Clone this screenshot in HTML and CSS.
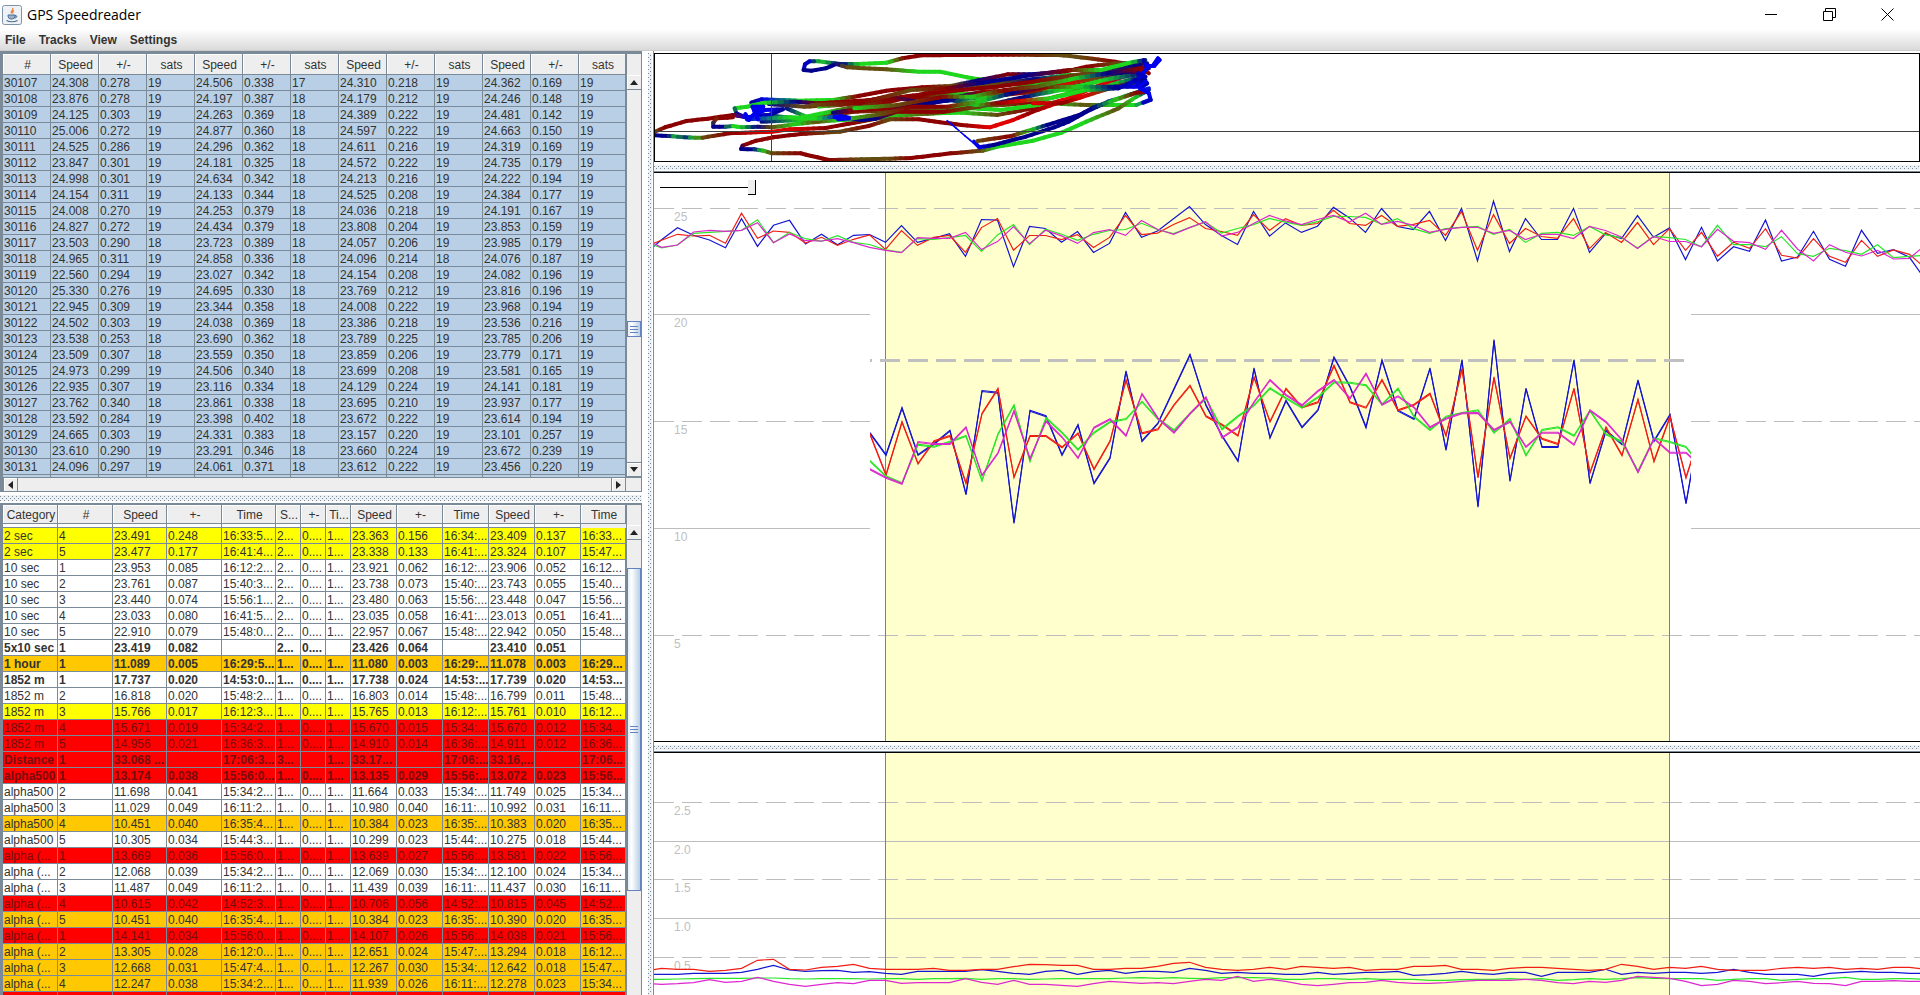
FILE: index.html
```html
<!DOCTYPE html>
<html lang="en">
<head>
<meta charset="utf-8">
<title>GPS Speedreader</title>
<link rel="stylesheet" href="styles.css">
</head>
<body>
<div class="window">
  <header class="titlebar">
    <svg class="app-icon" width="20" height="20" viewBox="0 0 20 20" aria-hidden="true">
      <rect x="0.5" y="0.5" width="19" height="19" rx="2" fill="#eef2f6" stroke="#7f93a8"/>
      <path d="M10.500 3c2 2-3 3-1 5.500M12 5.500c-2 1-1.500 2-1 3" fill="none" stroke="#e8843c" stroke-width="1.300"/>
      <path d="M6 10h7c0 3-1 4-3.500 4S6 13 6 10zM13 10.500c2.500-.5 2.500 2.500-.5 2.500" fill="#9db4cc" stroke="#4d6d92"/>
      <path d="M4.500 15.500c3 1.500 8 1.500 11 0" fill="none" stroke="#4d6d92" stroke-width="1.200"/>
    </svg>
    <h1 class="title">GPS Speedreader</h1>
    <div class="window-buttons">
      <button type="button" aria-label="Minimize"><svg width="13" height="13"><path d="M0 6.500h12"/></svg></button>
      <button type="button" aria-label="Restore"><svg width="13" height="13"><path d="M.5 3.500h9v9h-9zM2.500 3.500v-3h10v9h-3"/></svg></button>
      <button type="button" aria-label="Close"><svg width="13" height="13"><path d="M.5 .5l12 12M12.500 .5l-12 12"/></svg></button>
    </div>
  </header>
  <nav class="menubar" aria-label="Main menu">
    <button type="button">File</button>
    <button type="button">Tracks</button>
    <button type="button">View</button>
    <button type="button">Settings</button>
  </nav>
  <main class="split">
    <section class="tables">
      <div class="scrollpane with-bottom">
        <div class="viewport">
          <table class="points">
            <colgroup><col class="w48"><col class="w48"><col class="w48"><col class="w48"><col class="w48"><col class="w48"><col class="w48"><col class="w48"><col class="w48"><col class="w48"><col class="w48"><col class="w48"><col class="w47"></colgroup>
            <thead><tr><th>#</th><th>Speed</th><th>+/-</th><th>sats</th><th>Speed</th><th>+/-</th><th>sats</th><th>Speed</th><th>+/-</th><th>sats</th><th>Speed</th><th>+/-</th><th>sats</th></tr></thead>
            <tbody id="points"></tbody>
          </table>
        </div>
        <div class="vbar">
          <button type="button" aria-label="Scroll up"><i class="arrow up"></i></button>
          <div class="track"><div class="thumb small"><i class="grip"></i></div></div>
          <button type="button" aria-label="Scroll down"><i class="arrow down"></i></button>
        </div>
        <div class="hbar">
          <button type="button" aria-label="Scroll left"><i class="arrow left"></i></button>
          <div class="track"></div>
          <button type="button" aria-label="Scroll right"><i class="arrow right"></i></button>
        </div>
      </div>
      <div class="divider"></div>
      <div class="scrollpane">
        <div class="viewport">
          <table class="results">
            <colgroup><col class="w55"><col class="w55"><col class="w54"><col class="w55"><col class="w54"><col class="w25"><col class="w25"><col class="w25"><col class="w46"><col class="w46"><col class="w46"><col class="w46"><col class="w46"><col class="w45"></colgroup>
            <thead><tr><th>Category</th><th>#</th><th>Speed</th><th>+-</th><th>Time</th><th>S...</th><th>+-</th><th>Ti...</th><th>Speed</th><th>+-</th><th>Time</th><th>Speed</th><th>+-</th><th>Time</th></tr></thead>
            <tbody id="results"></tbody>
          </table>
        </div>
        <div class="vbar">
          <button type="button" aria-label="Scroll up"><i class="arrow up"></i></button>
          <div class="track"><div class="thumb large"><i class="grip"></i></div></div>
        </div>
      </div>
    </section>
    <div class="divider upright"></div>
    <section class="plots">
      <div class="map"><svg id="map" role="img" aria-label="Track map"></svg></div>
      <div class="divider"></div>
      <div class="chart closed">
        <svg id="speed" role="img" aria-label="Speed"></svg>
        <input class="zoom" type="range" min="0" max="100" value="100" aria-label="Zoom">
      </div>
      <div class="divider"></div>
      <div class="chart"><svg id="error" role="img" aria-label="Speed error"></svg></div>
    </section>
  </main>
</div>
<script src="app.js"></script>
</body>
</html>
```
FILE: styles.css
```css
* { box-sizing: border-box; }

body {
  margin: 0;
  font: 12px/15px "Liberation Sans", Arial, sans-serif;
  color: #333;
  background: #fff;
}

button {
  margin: 0;
  padding: 0;
  border: 0;
  background: none;
  color: inherit;
  font: inherit;
}

.window {
  display: grid;
  grid-template-rows: 29px 22px 1fr;
  height: 100vh;
  overflow: hidden;
}

.titlebar {
  display: flex;
  align-items: center;
  gap: 5px;
  padding: 0 4px 0 2px;
}

.title {
  margin: 0;
  flex: 1;
  font: 14px/20px "Open Sans", "Noto Sans", sans-serif;
  color: #000;
}

.window-buttons { display: flex; }

.window-buttons button {
  display: flex;
  justify-content: center;
  align-items: center;
  width: 58px;
  height: 28px;
}

.window-buttons svg { fill: none; stroke: #000; }

.menubar {
  display: flex;
  align-items: center;
  gap: 13px;
  padding: 2px 0 0 5px;
  font-weight: bold;
  background: linear-gradient(#fff, #dadada);
  border-bottom: 1px solid #ccc;
}

.split {
  display: grid;
  grid-template-columns: 642fr 11px 1267fr;
  min-height: 0;
}

.tables {
  display: grid;
  grid-template-rows: 441fr 11px 492fr;
  min-width: 0;
  min-height: 0;
}

.plots {
  display: grid;
  grid-template-rows: 111fr 10px 570fr 10px 243fr;
  min-width: 0;
  min-height: 0;
  border-left: 1px solid #7a8a99;
}

.divider {
  background-color: #eef1f4;
  background-image:
    conic-gradient(from 270deg at 1px 1px, #7a8a99 90deg, transparent 0),
    conic-gradient(from 270deg at 1px 1px, #7a8a99 90deg, transparent 0);
  background-size: 4px 4px;
  background-position: 0 0, 2px 2px;
  background-clip: content-box;
  padding: 3px 0 2px;
}

.plots .divider {
  padding-bottom: 1px;
  border-bottom: 1px solid #7a8a99;
}

.divider.upright { padding: 2px 1px 0 6px; }

.scrollpane {
  display: grid;
  grid-template-columns: 1fr 15px;
  grid-template-rows: 1fr;
  min-height: 0;
  border: solid #7a8a99;
  border-width: 2px 1px 0 3px;
  background: #eee;
}

.scrollpane.with-bottom {
  grid-template-rows: 1fr 14px;
  border-width: 3px 1px 1px 3px;
}

.viewport {
  min-height: 0;
  overflow: hidden;
}

table {
  width: 100%;
  table-layout: fixed;
  border-collapse: separate;
  border-spacing: 0;
}

.w48 { width: 48px; }
.w47 { width: 47px; }
.w55 { width: 55px; }
.w54 { width: 54px; }
.w46 { width: 46px; }
.w45 { width: 45px; }
.w25 { width: 25px; }

th, td {
  overflow: hidden;
  white-space: nowrap;
  border: solid #7a8a99;
  border-width: 0 1px 1px 0;
}

th {
  height: 21px;
  padding: 3px 0 0 2px;
  font-weight: normal;
  text-align: center;
  background: #eee;
  box-shadow: inset 1px 1px #fff;
}

.results th { height: 19px; }

td {
  height: 16px;
  padding: 1px 0 0 1px;
  text-align: left;
  line-height: 14px;
}

.points td { background: #b8cfe5; }
.results td { background: #fff; }
.results .yellow td { background: #ff0; }
.results .orange td { background: #ffc800; }
.results .red td { background: #f00; color: #780c0c; }
.results .best td { font-weight: bold; }
.results .sliver td { height: 4px; padding: 0; line-height: 3px; }

.vbar {
  display: flex;
  flex-direction: column;
  min-height: 0;
  padding-top: 20px;
  border-left: 1px solid #7a8a99;
}

.with-bottom .vbar { padding-top: 21px; }

.hbar {
  display: flex;
  margin-right: -15px;
  padding-right: 15px;
  border-top: 1px solid #7a8a99;
}

.vbar button, .hbar button {
  display: flex;
  flex: none;
  justify-content: center;
  align-items: center;
  border: 1px solid #7a8a99;
  box-shadow: inset 1px 1px #fff;
}

.vbar button { height: 15px; border-width: 0 0 1px; }
.vbar button:last-child { border-width: 1px 0; }
.hbar button { width: 15px; border-width: 0 1px; }

.track { flex: 1; background: #eee; }

.vbar .track { display: flex; flex-direction: column; }

.arrow { border: 4px solid transparent; }
.arrow.up { border-top: 0; border-bottom: 5px solid #222; }
.arrow.down { border-bottom: 0; border-top: 5px solid #222; }
.arrow.left { border-left: 0; border-right: 5px solid #222; }
.arrow.right { border-right: 0; border-left: 5px solid #222; }

.thumb {
  display: flex;
  justify-content: center;
  align-items: center;
  border: 1px solid #6382bf;
  background: linear-gradient(90deg, #e6eef7, #fff 30%, #b8cfe5);
}

.thumb.small { height: 16px; margin-top: 231px; }
.thumb.large { height: 323px; margin-top: 28px; }

.grip {
  width: 8px;
  height: 7px;
  background: repeating-linear-gradient(#6382bf 0 1px, transparent 1px 3px);
}

.map {
  min-height: 0;
  margin-top: 2px;
  border: 1px solid #000;
}

.chart {
  position: relative;
  min-height: 0;
  border-top: 1px solid #000;
}

.chart.closed { border-bottom: 1px solid #000; }

.map svg, .chart svg {
  display: block;
  width: 100%;
  height: 100%;
  overflow: hidden;
}

.chart text { fill: #c0c0c0; font-size: 12px; }
.grid { stroke: #bdbdbd; }
.grid.dashed { stroke-dasharray: 20 8; }
.edge { stroke: #7f7f7f; }
.selection { fill: #ffffce; }
.line { fill: none; }
.line.blue { stroke: #1414d2; }
.line.red { stroke: #f01e14; }
.line.green { stroke: #28e628; }
.line.magenta { stroke: #dc28cd; }
.average { stroke: #c0c0c0; stroke-width: 3; stroke-dasharray: 20 8; }
.crosshair { stroke: #404040; stroke-width: 1; }

.zoom {
  position: absolute;
  left: 6px;
  top: 7px;
  width: 96px;
  height: 15px;
  margin: 0;
  appearance: none;
  background: linear-gradient(#000, #000) 0 7px / 88px 1px no-repeat;
}

.zoom::-webkit-slider-thumb {
  appearance: none;
  width: 8px;
  height: 15px;
  background: #eee;
  border: solid #000;
  border-width: 0 1px 1px 0;
}
```
FILE: app.js
```js
// ---- Tables ----
const points = `30107 24.308 0.278 19 24.506 0.338 17 24.310 0.218 19 24.362 0.169 19
30108 23.876 0.278 19 24.197 0.387 18 24.179 0.212 19 24.246 0.148 19
30109 24.125 0.303 19 24.263 0.369 18 24.389 0.222 19 24.481 0.142 19
30110 25.006 0.272 19 24.877 0.360 18 24.597 0.222 19 24.663 0.150 19
30111 24.525 0.286 19 24.296 0.362 18 24.611 0.216 19 24.319 0.169 19
30112 23.847 0.301 19 24.181 0.325 18 24.572 0.222 19 24.735 0.179 19
30113 24.998 0.301 19 24.634 0.342 18 24.213 0.216 19 24.222 0.194 19
30114 24.154 0.311 19 24.133 0.344 18 24.525 0.208 19 24.384 0.177 19
30115 24.008 0.270 19 24.253 0.379 18 24.036 0.218 19 24.191 0.167 19
30116 24.827 0.272 19 24.434 0.379 18 23.808 0.204 19 23.853 0.159 19
30117 23.503 0.290 18 23.723 0.389 18 24.057 0.206 19 23.985 0.179 19
30118 24.965 0.311 19 24.858 0.336 18 24.096 0.214 18 24.076 0.187 19
30119 22.560 0.294 19 23.027 0.342 18 24.154 0.208 19 24.082 0.196 19
30120 25.330 0.276 19 24.695 0.330 18 23.769 0.212 19 23.816 0.196 19
30121 22.945 0.309 19 23.344 0.358 18 24.008 0.222 19 23.968 0.194 19
30122 24.502 0.303 19 24.038 0.369 18 23.386 0.218 19 23.536 0.216 19
30123 23.538 0.253 18 23.690 0.362 18 23.789 0.225 19 23.785 0.206 19
30124 23.509 0.307 18 23.559 0.350 18 23.859 0.206 19 23.779 0.171 19
30125 24.973 0.299 19 24.506 0.340 18 23.699 0.208 19 23.581 0.165 19
30126 22.935 0.307 19 23.116 0.334 18 24.129 0.224 19 24.141 0.181 19
30127 23.762 0.340 18 23.861 0.338 18 23.695 0.210 19 23.937 0.177 19
30128 23.592 0.284 19 23.398 0.402 18 23.672 0.222 19 23.614 0.194 19
30129 24.665 0.303 19 24.331 0.383 18 23.157 0.220 19 23.101 0.257 19
30130 23.610 0.290 19 23.291 0.346 18 23.660 0.224 19 23.672 0.239 19
30131 24.096 0.297 19 24.061 0.371 18 23.612 0.222 19 23.456 0.220 19`;

// Row class, then the cells in column order.
const results = `sliver|||||||||||||
yellow|2 sec|4|23.491|0.248|16:33:5...|2...|0....|1...|23.363|0.156|16:34:...|23.409|0.137|16:33...
yellow|2 sec|5|23.477|0.177|16:41:4...|2...|0....|1...|23.338|0.133|16:41:...|23.324|0.107|15:47...
|10 sec|1|23.953|0.085|16:12:2...|2...|0....|1...|23.921|0.062|16:12:...|23.906|0.052|16:12...
|10 sec|2|23.761|0.087|15:40:3...|2...|0....|1...|23.738|0.073|15:40:...|23.743|0.055|15:40...
|10 sec|3|23.440|0.074|15:56:1...|2...|0....|1...|23.480|0.063|15:56:...|23.448|0.047|15:56...
|10 sec|4|23.033|0.080|16:41:5...|2...|0....|1...|23.035|0.058|16:41:...|23.013|0.051|16:41...
|10 sec|5|22.910|0.079|15:48:0...|2...|0....|1...|22.957|0.067|15:48:...|22.942|0.050|15:48...
best|5x10 sec|1|23.419|0.082||2...|0....||23.426|0.064||23.410|0.051|
best orange|1 hour|1|11.089|0.005|16:29:5...|1...|0....|1...|11.080|0.003|16:29:...|11.078|0.003|16:29...
best|1852 m|1|17.737|0.020|14:53:0...|1...|0....|1...|17.738|0.024|14:53:...|17.739|0.020|14:53...
|1852 m|2|16.818|0.020|15:48:2...|1...|0....|1...|16.803|0.014|15:48:...|16.799|0.011|15:48...
yellow|1852 m|3|15.766|0.017|16:12:3...|1...|0....|1...|15.765|0.013|16:12:...|15.761|0.010|16:12...
red|1852 m|4|15.671|0.019|15:34:2...|1...|0....|1...|15.670|0.015|15:34:...|15.670|0.012|15:34...
red|1852 m|5|14.956|0.021|16:36:3...|1...|0....|1...|14.910|0.014|16:36:...|14.911|0.012|16:36...
best red|Distance|1|33.068 ...||17:06:3...|3...||1...|33.17...||17:06:...|33.16,...||17:06...
best red|alpha500|1|13.174|0.038|15:56:0...|1...|0....|1...|13.135|0.029|15:56:...|13.072|0.023|15:56...
|alpha500|2|11.698|0.041|15:34:2...|1...|0....|1...|11.664|0.033|15:34:...|11.749|0.025|15:34...
|alpha500|3|11.029|0.049|16:11:2...|1...|0....|1...|10.980|0.040|16:11:...|10.992|0.031|16:11...
orange|alpha500|4|10.451|0.040|16:35:4...|1...|0....|1...|10.384|0.023|16:35:...|10.383|0.020|16:35...
|alpha500|5|10.305|0.034|15:44:3...|1...|0....|1...|10.299|0.023|15:44:...|10.275|0.018|15:44...
red|alpha (...|1|13.669|0.036|15:56:0...|1...|0....|1...|13.639|0.027|15:56:...|13.581|0.022|15:56...
|alpha (...|2|12.068|0.039|15:34:2...|1...|0....|1...|12.069|0.030|15:34:...|12.100|0.024|15:34...
|alpha (...|3|11.487|0.049|16:11:2...|1...|0....|1...|11.439|0.039|16:11:...|11.437|0.030|16:11...
red|alpha (...|4|10.615|0.042|14:52:3...|1...|0....|1...|10.706|0.056|14:52:...|10.815|0.045|14:52...
orange|alpha (...|5|10.451|0.040|16:35:4...|1...|0....|1...|10.384|0.023|16:35:...|10.390|0.020|16:35...
red|alpha (...|1|14.141|0.034|15:56:0...|1...|0....|1...|14.107|0.026|15:56:...|14.038|0.021|15:56...
orange|alpha (...|2|13.305|0.028|16:12:0...|1...|0....|1...|12.651|0.024|15:47:...|13.294|0.018|16:12...
orange|alpha (...|3|12.668|0.031|15:47:4...|1...|0....|1...|12.267|0.030|15:34:...|12.642|0.018|15:47...
orange|alpha (...|4|12.247|0.038|15:34:2...|1...|0....|1...|11.939|0.026|16:11:...|12.278|0.023|15:34...
red||||||||||||||`;

const row = (cells, cls) =>
  `<tr class="${cls}">${cells.map(c => `<td>${c}</td>`).join("")}</tr>`;

document.getElementById("points").innerHTML =
  points.split("\n").map(l => row(l.split(" "), "")).join("") + row(Array(13).fill(""), "");

document.getElementById("results").innerHTML = results.split("\n").map(l => {
  const [cls, ...cells] = l.split("|");
  return row(cells.slice(0, 14), cls);
}).join("");

// ---- Charts ----
const STEP = 16, START = 231.5, SEL_END = 1015.5;
const colors = ["blue", "red", "green", "magenta"];

const grid = (y, label, dashed) =>
  `<line class="grid${dashed ? " dashed" : ""}" x1="0" x2="100%" y1="${y}" y2="${y}"/>` +
  `<text x="20" y="${y + 12}">${label}</text>`;

const polyline = (color, first, ys, start, width = 1.2) =>
  `<polyline class="line ${color}" stroke-width="${width}" points="${
    ys.map((y, i) => `${start + (first + i) * STEP},${y.toFixed(1)}`).join(" ")}"/>`;

const selection = `<rect class="selection" x="${START}" y="0" width="${SEL_END - START}" height="100%"/>`;
const edges = `<line class="edge" x1="${START}" x2="${START}" y1="0" y2="100%"/>` +
  `<line class="edge" x1="${SEL_END}" x2="${SEL_END}" y1="0" y2="100%"/>`;

// Samples before, inside and after the magnified range.
const before = {
  blue: [281,239,203,226,240,263,176,259,196,181,252,223,254,226],
  red: [259,241,223,228,226,250,160,235,213,217,249,232,256,238],
  green: [246,264,255,220,217,214,211,179,248,217,236,244,227,247],
  magenta: [238,262,255,216,211,214,211,188,248,222,242,243,236,248]
};
const inside = {
  blue: [339,405,264,405,372,332,523,213,218,609,272,289,405,315,490,414,154,363,310,207,104,256,347,423,145,353,242,322,270,112,200,322,121,272,297,145,390,120,560,60,483,206,381,381,120,490,332,373,181,363,284,550,279],
  red: [343,465,306,431,364,348,490,281,206,472,348,348,382,340,448,364,180,340,328,255,197,289,314,347,172,305,206,262,247,137,247,263,180,271,254,221,347,147,472,172,415,289,356,372,206,458,322,406,239,424,290,473,321],
  green: [423,469,490,374,380,365,348,482,343,256,424,294,338,389,338,306,297,245,297,331,281,235,328,289,256,205,235,263,232,187,188,196,253,206,290,330,290,279,271,338,297,406,330,322,347,272,343,365,454,355,366,381,442],
  magenta: [448,473,491,366,372,372,322,466,399,273,416,304,351,414,323,298,347,222,295,338,281,232,353,322,247,180,225,256,213,180,235,161,254,229,262,322,296,280,279,330,305,381,338,338,374,271,306,360,457,356,398,398,442]
};
const after = {
  blue: [303,260,274,180,303,291,214,298,319,211,280,269,292,360],
  red: [289,247,265,206,286,294,236,289,307,241,289,270,283,325],
  green: [196,254,254,260,230,281,289,265,272,283,254,293,289,286],
  magenta: [208,244,248,268,211,267,303,254,277,288,271,297,295,255]
};

const full = c => [
  ...before[c].map(v => v / 3 - 13),
  ...inside[c].map(v => v / 8.4 + 21.1),
  ...after[c].map(v => v / 3 - 13)
];
const magnified = c => {
  const ys = inside[c].map(v => v / 3 + 147);
  return polyline(c, -1, ys.map(y => y - 0.5), 232, 1.1) + polyline(c, -1, ys.map(y => y + 0.5), 232, 1.1);
};

document.getElementById("speed").innerHTML =
  `<clipPath id="lens"><rect x="216" y="130" width="821" height="260"/></clipPath>` + selection +
  grid(35.5, "25", true) + grid(141.5, "20") + grid(248.5, "15", true) + grid(355.5, "10") + grid(462.5, "5", true) +
  `<rect x="216" y="130" width="821" height="260" fill="#fff"/>` +
  `<rect class="selection" x="232" y="130" width="784" height="260"/>` + edges +
  colors.map(c => polyline(c, -15, full(c), START)).join("") +
  `<g clip-path="url(#lens)"><line class="average" x1="198" x2="1037" y1="187.5" y2="187.5"/>` +
  colors.map(magnified).join("") + `</g>`;

const error = {
  red: [693,685,688,688,694,691,685,661,658,688,690,682,679,673,685,688,688,688,685,691,691,688,688,680,673,674,676,676,688,688,685,685,679,670,667,682,688,691,688,682,688,679,682,685,682,691,688,688,679,679,676,688,688,691,685,682,682,685,688,691,688,673,679,688,682,685,679,688,691,691,691,685,682,685,682,688,685,688,682,682,688],
  blue: [703,703,703,700,700,700,697,688,676,690,694,692,691,697,695,700,703,694,694,694,694,689,694,700,703,694,691,703,695,691,700,694,694,697,685,691,700,697,700,700,703,703,697,703,700,697,697,694,706,704,700,694,700,703,697,697,709,697,697,697,688,703,697,700,697,697,700,697,688,697,703,703,703,709,700,697,694,697,697,700,700],
  green: [718,718,717,716,715,715,715,714,714,716,717,716,716,716,717,716,716,718,716,716,715,718,716,716,718,717,716,716,716,716,714,713,715,713,715,716,713,713,713,714,718,718,716,716,718,716,718,718,718,721,721,719,718,718,716,718,716,721,719,716,718,716,713,715,716,716,716,721,718,716,716,721,718,716,716,712,718,718,716,716,718],
  magenta: [730,733,731,728,719,727,724,712,724,733,739,733,728,731,721,721,730,728,728,728,716,727,733,721,733,733,736,739,731,724,727,730,728,731,724,718,721,709,724,718,724,733,737,733,728,727,721,727,730,730,728,724,721,721,721,718,721,728,731,724,727,721,709,712,715,724,737,733,721,724,731,728,724,730,731,737,724,724,722,724,724]
};

document.getElementById("error").innerHTML = selection +
  grid(49.5, "2.5", true) + grid(88.5, "2.0") + grid(126.5, "1.5", true) + grid(165.5, "1.0") + grid(204.5, "0.5", true) +
  edges + colors.map(c => polyline(c, -15, error[c].map(v => v / 3 - 13), START)).join("");

// ---- Track map: each point is x, y and a speed colour ----
const shades = { r: [139,0,0], R: [225,0,0], o: [100,75,15], g: [30,215,30], b: [0,0,140], B: [0,0,240] };
const tracks = [
  "410 205 b 470 232 g 560 222 o 660 205 r 760 192 o 860 182 b 960 172 g 1060 160 r 1160 150 o 1260 128 r 1360 105 g 1415 95 b",
  "360 192 b 460 200 o 560 195 r 680 178 r 800 172 r 900 162 g 1000 160 o 1100 132 g 1200 120 o 1300 100 r 1400 72 o",
  "340 245 b 460 240 g 580 215 r 700 212 o 800 208 o 900 200 g 1000 196 o 1100 188 r 1200 160 g 1300 142 o 1400 118 b",
  "1425 85 b 1400 80 r 1330 65 r 1220 50 o 1170 45 o 1000 44 r 790 46 r 735 55 r 690 68 g 610 72 g 560 72 b 500 64 g 475 64 b 462 73 B 458 90 b 480 92 b 520 85 b 550 72 b 580 82 o 690 88 o 780 95 g 840 95 g 930 115 g 1050 130 o 1130 145 g 1200 150 g 1270 150 o 1330 130 g 1410 110 b",
  "1420 70 b 1330 70 o 1250 80 r 1190 95 r 1090 103 b 1030 103 r 930 125 b 870 138 o 790 142 r 690 152 r 600 170 r 540 180 g 450 182 g 340 178 B 312 188 b 330 205 B",
  "1410 90 b 1300 105 b 1200 105 g 1100 118 b 1000 130 o 900 150 o 780 165 r 650 180 r 500 190 r 430 185 b 350 188 g 300 200 g 265 205 g 270 220 b 300 235 B",
  "42 275 o 70 262 r 130 243 r 190 236 r 260 225 r 300 232 B 350 225 b 440 235 g 520 218 g 600 200 o 700 185 r 800 160 r 900 150 r 1000 140 r 1100 125 r 1250 100 o 1400 75 b",
  "42 286 b 80 288 b 105 290 g 125 292 b 155 293 g 175 293 o 250 280 r 370 275 R 420 268 R 520 264 r 600 248 r 690 230 o 760 222 g 900 218 g 1000 225 o 1100 205 r 1200 175 R 1310 125 R 1400 95 b",
  "260 232 r 215 235 r 205 248 o 205 260 b 240 260 b 260 258 g 285 262 g 330 260 b 370 262 o 440 252 g 500 245 o 560 240 g 640 236 b 700 228 g 820 220 o 930 205 g 1010 210 g 1150 190 g 1250 195 o 1330 195 g 1390 195 g 1425 180 B",
  "330 238 B 400 208 b 350 210 B 300 238 B 420 232 g 500 236 g 560 228 B 620 240 b 660 236 b 720 215 r 850 215 r 950 200 o 1080 170 b 1180 150 g 1300 120 g 1410 100 b",
  "375 292 r 325 302 r 287 317 r 283 327 b 320 328 b 345 332 g 370 340 o 450 340 r 480 348 r 530 360 r 620 358 o 700 356 o 760 354 r 870 340 r 960 332 o 1000 320 g 1100 302 g 1180 278 g 1250 245 g 1340 205 o 1390 170 g 1425 150 b",
  "370 292 r 450 282 r 560 275 o 640 258 r 700 238 o 780 238 r 900 255 r 980 262 R 1045 240 R 1100 215 r 1180 185 R 1240 170 R 1330 140 o 1415 120 b",
  "935 305 B 950 322 B 990 315 b 1080 290 b 1160 262 b 1200 245 b 1250 215 b 1310 185 b 1340 175 g 1425 145 B",
  "945 303 o 1040 288 r 1100 268 g 1140 255 b 1230 225 b 1270 202 b 1330 180 g 1390 158 r 1415 155 r",
  "500 200 g 590 190 r 700 170 r 800 190 b 870 180 b 940 195 g 1000 190 r 1070 182 R 1150 175 g 1250 150 g 1340 145 b 1410 110 B",
  "540 218 b 600 210 r 700 205 r 800 195 b 870 175 b 960 155 r 1100 150 r 1200 130 R 1280 112 o 1350 95 b 1420 95 r",
  "560 240 g 680 222 o 760 200 r 860 200 r 960 182 g 1040 160 b 1130 140 r 1230 140 g 1330 140 b 1400 140 B",
  "600 205 g 720 195 o 850 170 r 930 170 g 1020 150 r 1110 140 o 1220 115 g 1310 100 b 1400 85 r 1425 100 r",
  "480 195 o 620 188 r 760 150 o 860 145 r 960 128 b 1080 108 b 1200 90 r 1290 90 g 1380 66 g 1415 60 b",
  "1180 185 R 1235 172 R 1180 190 r 1100 190 R",
  "1410 60 b 1420 85 B 1400 110 B 1420 130 b 1400 145 B 1425 160 B 1430 180 B 1410 188 b",
  "1385 120 b 1415 125 B 1390 135 B 1415 110 b 1395 100 B",
  "1420 78 B 1440 78 B 1455 60 B 1450 55 B 1438 74 B",
  "295 222 B 305 240 B 325 215 B 345 200 B 315 200 B 330 238 B",
  "545 232 B 585 235 B 555 238 B"
];

const mapX = x => x / 2.8 - 15, mapY = y => y / 3 - 14;
const draw = (spec, width) => {
  const t = spec.split(" ");
  let out = "";
  for (let i = 0; i + 5 < t.length; i += 3) {
    const [x1, y1, x2, y2] = [+t[i], +t[i + 1], +t[i + 3], +t[i + 4]];
    const a = shades[t[i + 2]], b = shades[t[i + 5]];
    const n = Math.max(1, Math.round(Math.hypot(x2 - x1, y2 - y1) / 16));
    for (let k = 0; k < n; k++) {
      const p = k / n, q = (k + 1) / n, m = (p + q) / 2;
      const rgb = a.map((v, j) => Math.round(v + (b[j] - v) * m));
      out += `<line x1="${mapX(x1 + (x2 - x1) * p).toFixed(1)}" y1="${mapY(y1 + (y2 - y1) * p).toFixed(1)}" x2="${
        mapX(x1 + (x2 - x1) * q).toFixed(1)}" y2="${mapY(y1 + (y2 - y1) * q).toFixed(1)}" stroke="rgb(${rgb})" stroke-width="${width}"/>`;
    }
  }
  return out;
};

document.getElementById("map").innerHTML =
  `<g stroke-linecap="round">${tracks.map(t => draw(t, 4)).join("")}${draw("860 242 B 935 310 B", 1.6)}</g>` +
  `<g class="crosshair"><line x1="116.5" x2="116.5" y1="0" y2="100%"/><line x1="0" x2="100%" y1="77.5" y2="77.5"/></g>`;
```
